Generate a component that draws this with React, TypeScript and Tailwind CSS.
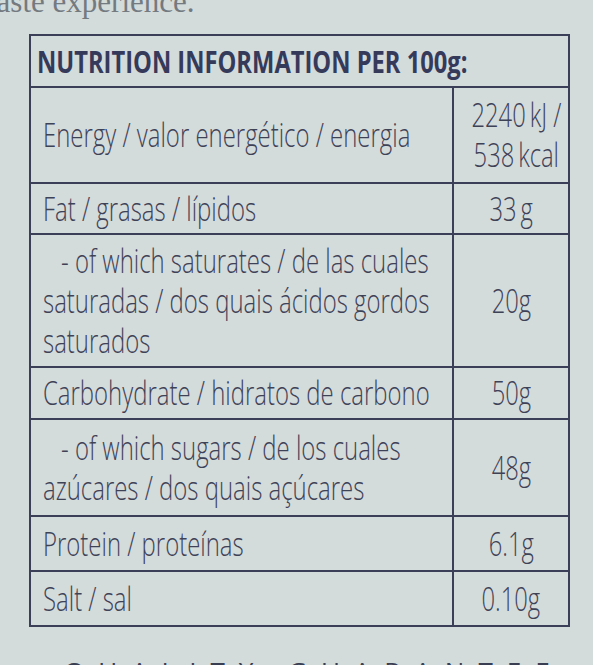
import React from "react";

const F = { fontFamily: '"Open Sans", "Noto Sans", sans-serif' };

function L({ children, indent = false }: { children: React.ReactNode; indent?: boolean }) {
  return (
    <div className={indent ? "pl-[18px]" : ""}>
      <span className="inline-block origin-left scale-x-[0.725] whitespace-nowrap">{children}</span>
    </div>
  );
}

function V({ children }: { children: React.ReactNode }) {
  return (
    <div className="flex justify-center">
      <span className="inline-block shrink-0 origin-center scale-x-[0.72] whitespace-nowrap">{children}</span>
    </div>
  );
}

function Row({ h, left, right, last = false }: { h: string; left: React.ReactNode; right: React.ReactNode; last?: boolean }) {
  return (
    <div className={`flex ${h} ${last ? "" : "border-b-2"} border-[#3b3f58]`}>
      <div className="w-[423px] border-r-2 border-[#3b3f58] flex flex-col justify-center pl-[12px] leading-[40px]">
        {left}
      </div>
      <div className="flex-1 flex flex-col justify-center leading-[40px]">{right}</div>
    </div>
  );
}

export default function App() {
  return (
    <div
      className="w-[593px] h-[665px] overflow-hidden bg-[#d4dbdb] text-[#3e4257]"
      style={F}
    >
      <div
        className="-mt-[18px] -ml-[12px] text-[31px] leading-[40px] text-[#737a80] whitespace-nowrap"
        style={{ fontFamily: '"Liberation Serif", "DejaVu Serif", serif' }}
      >
        taste experience.
      </div>
      <div className="ml-[29px] mt-[12px] w-[541px] border-2 border-[#3b3f58] text-[33px] font-light">
        <div className="h-[52px] border-b-2 border-[#3b3f58] flex items-center pl-[6px]">
          <span className="inline-block origin-left scale-x-[0.765] whitespace-nowrap font-bold text-[31px] text-[#363a5a]">
            NUTRITION INFORMATION PER 100g:
          </span>
        </div>
        <Row
          h="h-[96px]"
          left={<L>Energy / valor energético / energia</L>}
          right={
            <>
              <V>2240{"\u2009"}kJ /</V>
              <V>538{"\u2009"}kcal</V>
            </>
          }
        />
        <Row h="h-[51px]" left={<L>Fat / grasas / lípidos</L>} right={<V>33{"\u2009"}g</V>} />
        <Row
          h="h-[133px]"
          left={
            <>
              <L indent>- of which saturates / de las cuales</L>
              <L>saturadas / dos quais ácidos gordos</L>
              <L>saturados</L>
            </>
          }
          right={<V>20g</V>}
        />
        <Row h="h-[52px]" left={<L>Carbohydrate / hidratos de carbono</L>} right={<V>50g</V>} />
        <Row
          h="h-[97px]"
          left={
            <>
              <L indent>- of which sugars / de los cuales</L>
              <L>azúcares / dos quais açúcares</L>
            </>
          }
          right={<V>48g</V>}
        />
        <Row h="h-[55px]" left={<L>Protein / proteínas</L>} right={<V>6.1g</V>} />
        <Row h="h-[53px]" left={<L>Salt / sal</L>} right={<V>0.10g</V>} last />
      </div>
      <div className="mt-[29px] ml-[64px] text-[26px] leading-[30px] tracking-[14px] whitespace-nowrap text-[#3a3e52]">
        QUALITY GUARANTEE
      </div>
    </div>
  );
}
